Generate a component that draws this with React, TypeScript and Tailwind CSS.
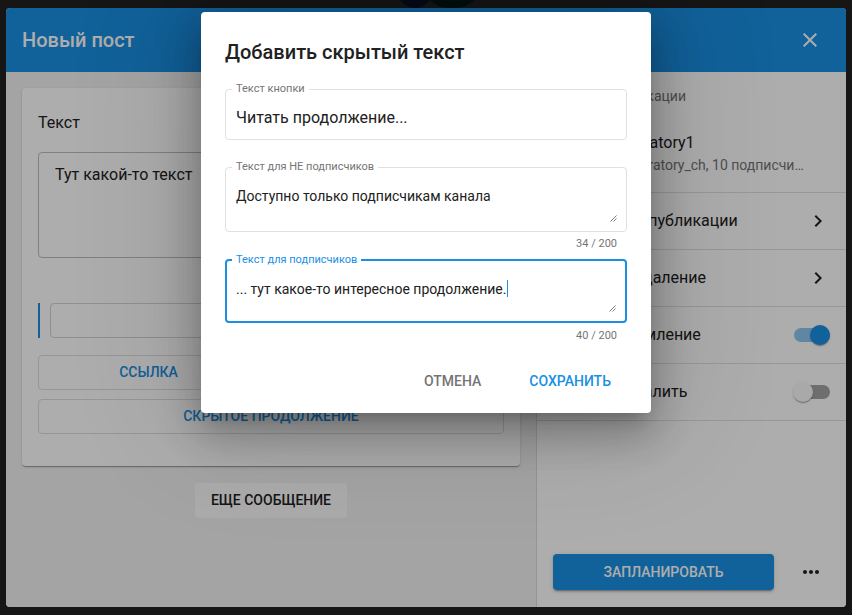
import React from "react";

function CloseIcon() {
  return (
    <svg width="24" height="24" viewBox="0 0 24 24" fill="currentColor">
      <path d="M19 6.41 17.59 5 12 10.59 6.41 5 5 6.41 10.59 12 5 17.59 6.41 19 12 13.41 17.59 19 19 17.59 13.41 12z" />
    </svg>
  );
}

function Chevron() {
  return (
    <svg width="24" height="24" viewBox="0 0 24 24" fill="#212121">
      <path d="M10 6 8.59 7.41 13.17 12l-4.58 4.59L10 18l6-6z" />
    </svg>
  );
}

function MoreHoriz() {
  return (
    <svg width="24" height="24" viewBox="0 0 24 24" fill="#212121">
      <path d="M6 10c-1.1 0-2 .9-2 2s.9 2 2 2 2-.9 2-2-.9-2-2-2zm12 0c-1.1 0-2 .9-2 2s.9 2 2 2 2-.9 2-2-.9-2-2-2zm-6 0c-1.1 0-2 .9-2 2s.9 2 2 2 2-.9 2-2-.9-2-2-2z" />
    </svg>
  );
}

function Grip() {
  return (
    <svg width="7" height="7" viewBox="0 0 7 7" className="absolute bottom-[9px] right-[9px]">
      <path d="M6.5 0.5 L0.5 6.5 M6.5 3.5 L3.5 6.5" stroke="#7a7a7a" strokeWidth="1" />
    </svg>
  );
}

function Switch({ on }: { on: boolean }) {
  return (
    <div
      className={
        on
          ? "flex h-[14px] w-[36px] items-center rounded-full bg-[#8cc7f1]"
          : "flex h-[14px] w-[36px] items-center rounded-full bg-[#a3a3a3]"
      }
    >
      {on ? (
        <div className="ml-auto h-5 w-5 shrink-0 rounded-full bg-[#1a8fe3] shadow-[0_2px_1px_-1px_rgba(0,0,0,0.2),0_1px_1px_0_rgba(0,0,0,0.14),0_1px_3px_0_rgba(0,0,0,0.12)]" />
      ) : (
        <div className="-ml-px h-5 w-5 shrink-0 rounded-full bg-[#fafafa] shadow-[0_2px_1px_-1px_rgba(0,0,0,0.2),0_1px_1px_0_rgba(0,0,0,0.14),0_1px_3px_0_rgba(0,0,0,0.12)]" />
      )}
    </div>
  );
}

export default function App() {
  return (
    <div className="relative h-[615px] w-[852px] overflow-hidden bg-[#212121] font-['Roboto',sans-serif]">
      <div className="absolute left-[398px] top-[-44px] h-[52px] w-[34px] rounded-full bg-[#0b1024]" />
      <div className="absolute left-[420px] top-[-52px] h-[60px] w-[64px] rounded-full bg-[#021616]" />

      <div className="flex h-full w-full flex-col px-[6px] pb-[8px] pt-[8px]">
        <div className="flex flex-1 flex-col overflow-hidden rounded-[4px] bg-white">
          <header className="flex h-[64px] shrink-0 items-center justify-between bg-[#1a8fe3] pl-4 pr-3 text-white">
            <h1 className="text-[20px] font-medium leading-8">Новый пост</h1>
            <button className="p-3">
              <CloseIcon />
            </button>
          </header>

          <div className="flex min-h-0 flex-1">
            <section className="flex w-[530px] shrink-0 flex-col items-center bg-[#f2f2f2] p-4">
              <div className="w-full rounded-[4px] bg-white px-4 pb-8 pt-[25px] shadow-[0_2px_1px_-1px_rgba(0,0,0,0.2),0_1px_1px_0_rgba(0,0,0,0.14),0_1px_3px_0_rgba(0,0,0,0.12)]">
                <div className="text-[16px] leading-[19px] text-[#212121]">Текст</div>
                <div className="mt-5 h-[106px] rounded-[4px] border border-[#bdbdbd] px-4 pt-3 text-[16px] leading-[19px] text-[#212121]">
                  Тут какой-то текст
                </div>
                <div className="mt-[45px] flex h-[35px] gap-[10px]">
                  <div className="w-[2px] bg-[#1a8fe3]" />
                  <div className="flex-1 rounded-[4px] border border-[#d4d4d4]" />
                </div>
                <div className="mt-[17px] grid grid-cols-2 gap-6">
                  <button className="h-[35px] rounded-[4px] border border-[#dedede] text-[14px] font-medium uppercase text-[#1a8fe3]">
                    Ссылка
                  </button>
                  <button className="h-[35px] rounded-[4px] border border-[#dedede] text-[14px] font-medium uppercase text-[#1a8fe3]">
                    Кнопка
                  </button>
                </div>
                <button className="mt-[9px] h-[35px] w-full rounded-[4px] border border-[#dedede] text-[14px] font-medium uppercase text-[#1a8fe3]">
                  Скрытое продолжение
                </button>
              </div>
              <button className="mt-[17px] h-[35px] w-[152px] rounded-[4px] bg-[#fdfdfd] text-[14px] font-medium uppercase text-[#212121]">
                Еще сообщение
              </button>
            </section>

            <aside className="flex min-w-0 flex-1 flex-col border-l border-[#dcdcdc] bg-white">
              <div className="px-4 pt-4 text-[14px] leading-[17px] text-[#757575]">Каналы публикации</div>
              <div className="mt-7 flex items-center gap-4 border-b border-[#e0e0e0] pb-[18px] pl-4 pr-[40px]">
                <div className="h-10 w-10 shrink-0 rounded-full bg-[#7e57c2]" />
                <div className="min-w-0 flex-1">
                  <div className="truncate text-[16px] leading-[19px] text-[#212121]">Laboratory1</div>
                  <div className="mt-[5px] truncate text-[14px] leading-[17px] text-[#757575]">
                    @laboratory_ch, 10 подписчиков
                  </div>
                </div>
              </div>
              <div className="flex h-[57px] items-center justify-between border-b border-[#e0e0e0] px-4">
                <span className="text-[16px] text-[#212121]">Дата, время публикации</span>
                <Chevron />
              </div>
              <div className="flex h-[57px] items-center justify-between border-b border-[#e0e0e0] px-4">
                <span className="text-[16px] text-[#212121]">Отсрочить удаление</span>
                <Chevron />
              </div>
              <div className="flex h-[57px] items-center justify-between border-b border-[#e0e0e0] pl-4 pr-4">
                <span className="text-[16px] text-[#212121]">Тихое уведомление</span>
                <Switch on />
              </div>
              <div className="flex h-[57px] items-center justify-between border-b border-[#e0e0e0] pl-4 pr-4">
                <span className="text-[16px] text-[#212121]">Скрыть и удалить</span>
                <Switch on={false} />
              </div>
              <div className="flex-1" />
              <div className="flex items-center justify-between pb-[15px] pl-4 pr-[15px]">
                <button className="h-9 w-[221px] rounded-[4px] bg-[#1a8fe3] text-[14px] font-medium uppercase text-white shadow-[0_3px_1px_-2px_rgba(0,0,0,0.2),0_2px_2px_0_rgba(0,0,0,0.14),0_1px_5px_0_rgba(0,0,0,0.12)]">
                  Запланировать
                </button>
                <button className="flex h-10 w-10 items-center justify-center rounded-full">
                  <MoreHoriz />
                </button>
              </div>
            </aside>
          </div>
        </div>
      </div>

      <div className="absolute inset-0 flex justify-center bg-black/[0.32] pt-[12px]">
        <div className="h-fit w-[450px] rounded-[4px] bg-white px-6 pb-[14px] pt-6 shadow-[0_11px_15px_-7px_rgba(0,0,0,0.2),0_24px_38px_3px_rgba(0,0,0,0.14),0_9px_46px_8px_rgba(0,0,0,0.12),0_0_120px_20px_rgba(0,0,0,0.12)]">
          <h2 className="text-[20px] font-medium leading-8 text-[#212121]">Добавить скрытый текст</h2>

          <fieldset className="mt-[14px] rounded-[4px] border border-[#e0e0e0] px-0">
            <legend className="ml-[6px] px-1 text-[11px] leading-[14px] text-[#757575]">Текст кнопки</legend>
            <div className="px-[10px] pb-3 pt-3 text-[16px] leading-[19px] text-[#212121]">Читать продолжение...</div>
          </fieldset>

          <fieldset className="relative mt-5 rounded-[4px] border border-[#e0e0e0] px-0">
            <legend className="ml-[6px] px-1 text-[11px] leading-[14px] text-[#757575]">Текст для НЕ подписчиков</legend>
            <div className="mb-[10px] mt-[13px] h-[34px] px-[10px] text-[14px] leading-[19px] text-[#212121]">
              Доступно только подписчикам канала
            </div>
            <Grip />
          </fieldset>
          <div className="mt-[3px] pr-[10px] text-right text-[11px] leading-[18px] text-[#757575]">34 / 200</div>

          <fieldset className="relative rounded-[4px] border-2 border-[#1a8fe3] px-0">
            <legend className="ml-[5px] px-1 text-[11px] leading-[14px] text-[#1a8fe3]">Текст для подписчиков</legend>
            <div className="mb-[10px] mt-[10px] h-[34px] px-[9px] text-[14px] leading-[19px] text-[#212121]">
              ... тут какое-то интересное продолжение.
              <span className="ml-px inline-block h-[17px] w-px translate-y-[3px] bg-[#1a8fe3]" />
            </div>
            <Grip />
          </fieldset>
          <div className="mt-[4px] pr-[10px] text-right text-[11px] leading-[18px] text-[#757575]">40 / 200</div>

          <div className="mt-[18px] flex justify-end gap-4">
            <button className="h-9 px-4 text-[14px] font-medium uppercase text-[#757575]">Отмена</button>
            <button className="h-9 px-4 text-[14px] font-medium uppercase text-[#1a8fe3]">Сохранить</button>
          </div>
        </div>
      </div>
    </div>
  );
}
